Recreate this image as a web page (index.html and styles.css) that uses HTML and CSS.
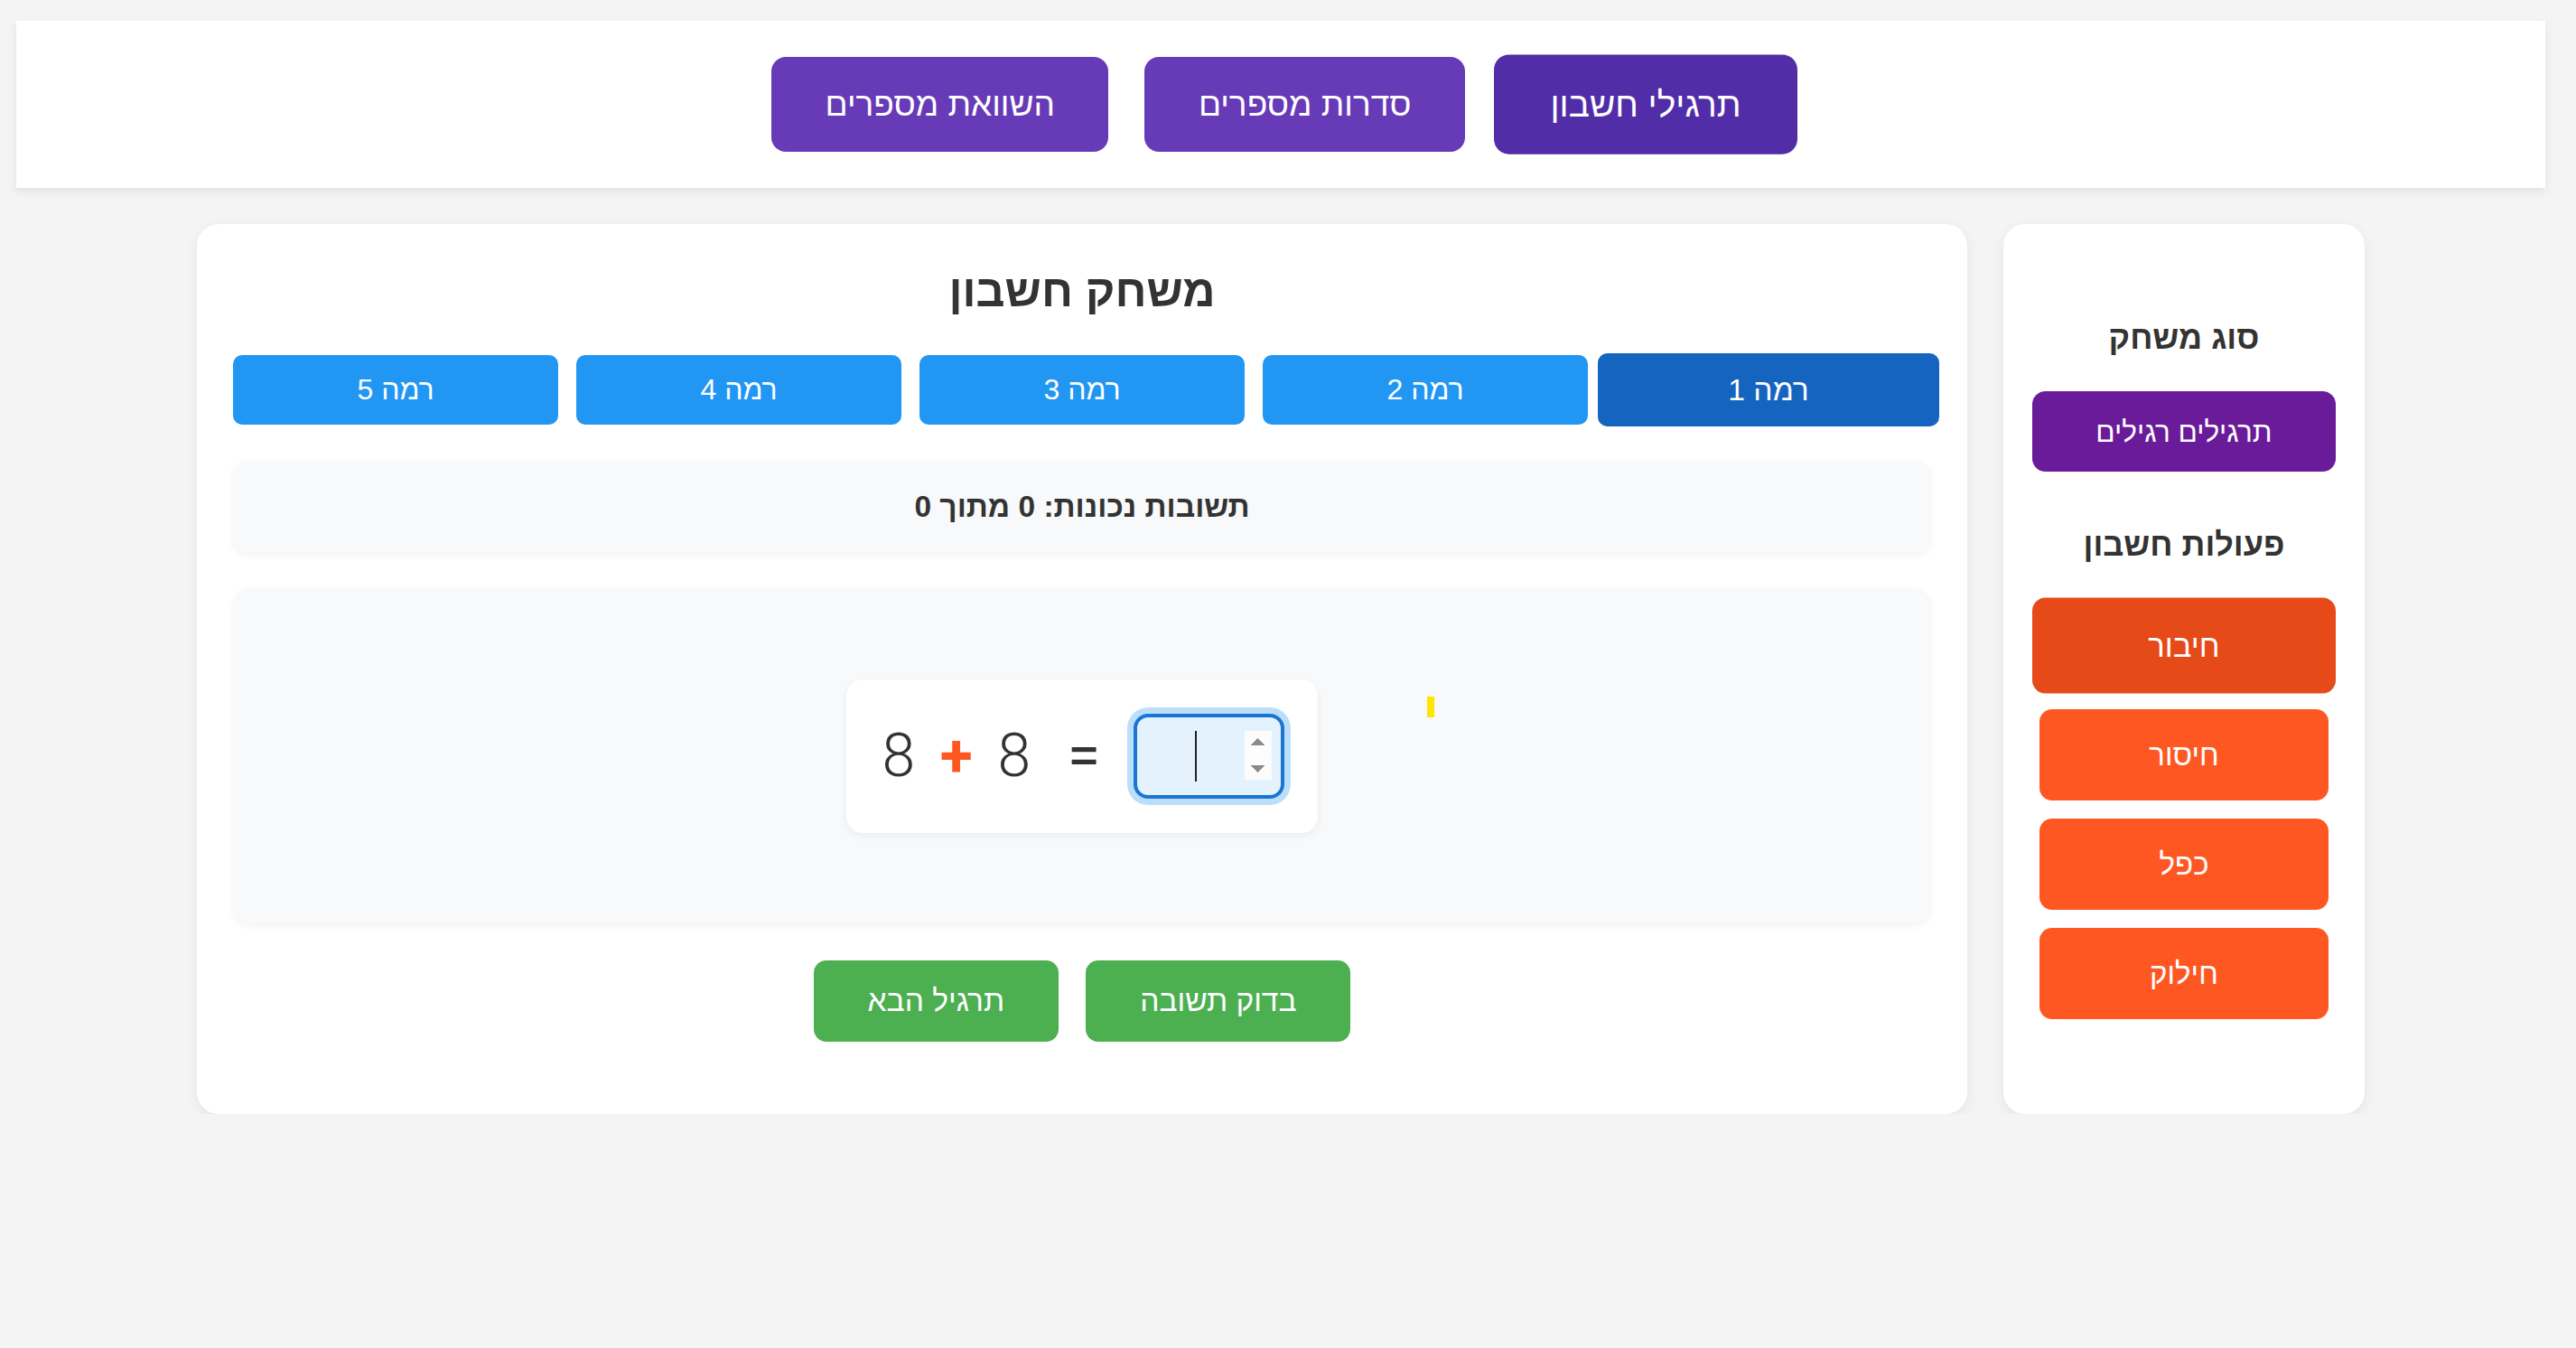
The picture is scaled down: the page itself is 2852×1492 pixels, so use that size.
FILE: index.html
```html
<!DOCTYPE html>
<html lang="he" dir="rtl">
<head>
<meta charset="utf-8">
<title>משחק חשבון</title>
<link rel="stylesheet" href="styles.css">
</head>
<body>
<div class="page">
  <header class="topbar">
    <nav class="tabs">
      <button class="tab active">תרגילי חשבון</button>
      <button class="tab">סדרות מספרים</button>
      <button class="tab">השוואת מספרים</button>
    </nav>
  </header>

  <div class="layout">
    <aside class="sidebar">
      <section class="side-section">
        <h3 class="side-title">סוג משחק</h3>
        <button class="mode active">תרגילים רגילים</button>
      </section>
      <section class="side-section ops-section">
        <h3 class="side-title">פעולות חשבון</h3>
        <div class="ops">
          <button class="op-btn active">חיבור</button>
          <button class="op-btn">חיסור</button>
          <button class="op-btn">כפל</button>
          <button class="op-btn">חילוק</button>
        </div>
      </section>
    </aside>

    <main class="game-card">
      <h1 class="title">משחק חשבון</h1>
      <div class="levels">
        <button class="level active">רמה 1</button>
        <button class="level">רמה 2</button>
        <button class="level">רמה 3</button>
        <button class="level">רמה 4</button>
        <button class="level">רמה 5</button>
      </div>
      <div class="score">תשובות נכונות: 0 מתוך 0</div>
      <div class="game-area">
        <div class="equation">
          <span class="tok num">8</span>
          <span class="tok op">+</span>
          <span class="tok num">8</span>
          <span class="tok eq">=</span>
          <span class="answer-wrap">
            <input class="answer" type="number" autofocus>
            <span class="caret"></span>
          </span>
        </div>
        <span class="spark"></span>
      </div>
      <div class="actions">
        <button class="action">בדוק תשובה</button>
        <button class="action">תרגיל הבא</button>
      </div>
    </main>
  </div>
</div>
</body>
</html>
```

FILE: styles.css
```css
* { box-sizing: border-box; }
html, body { margin: 0; }
body {
  background: #f4f4f4;
  font-family: "Liberation Sans", Arial, sans-serif;
  color: #333;
}
button { font-family: "Liberation Sans", Arial, sans-serif; cursor: pointer; }

.page { width: 2800px; margin: 0 34px 0 18px; padding-top: 23px; }

.topbar {
  background: #fff;
  padding: 40px 0;
  box-shadow: 0 4px 10px rgba(0,0,0,0.08);
}
.tabs { display: flex; justify-content: center; gap: 40px; }
.tab {
  height: 105px;
  padding: 0 59.5px;
  border: 0;
  border-radius: 16px;
  background: #673ab7;
  color: #fff;
  font-size: 37px;
}
.tab.active { background: #512da8; transform: scale(1.05); }

.layout {
  width: 2400px;
  margin: 40px auto 0;
  display: flex;
  gap: 40px;
  align-items: stretch;
}

.sidebar {
  width: 400px;
  flex: none;
  background: #fff;
  border-radius: 24px;
  padding: 40px;
  box-shadow: 0 4px 14px rgba(0,0,0,0.07);
  display: flex;
  flex-direction: column;
  justify-content: center;
}
.side-section { display: flex; flex-direction: column; }
.ops-section { margin-top: 62px; }
.side-title {
  margin: 0 0 41px;
  font-size: 36px;
  line-height: 41px;
  font-weight: bold;
  text-align: center;
  color: #333;
}
.mode {
  height: 85px;
  border: 0;
  border-radius: 14px;
  background: #6a1b9a;
  color: #fff;
  font-size: 30px;
  transform: scale(1.05);
}
.ops { display: flex; flex-direction: column; gap: 20px; }
.op-btn {
  height: 101px;
  border: 0;
  border-radius: 14px;
  background: #ff5722;
  color: #fff;
  font-size: 33px;
}
.op-btn.active { background: #e64a19; transform: scale(1.05); }

.game-card {
  flex: 1;
  background: #fff;
  border-radius: 24px;
  padding: 40px;
  box-shadow: 0 4px 14px rgba(0,0,0,0.07);
}
.title {
  margin: 0 0 38px;
  font-size: 50px;
  line-height: 68px;
  font-weight: bold;
  text-align: center;
  color: #333;
}
.levels { display: flex; gap: 20px; margin-top: -1px; }
.level {
  flex: 1;
  height: 77px;
  border: 0;
  border-radius: 10px;
  background: #2196f3;
  color: #fff;
  font-size: 32px;
}
.level.active { background: #1565c0; transform: scale(1.05); }

.score {
  margin-top: 40px;
  height: 102px;
  display: flex;
  align-items: center;
  justify-content: center;
  background: #f8f9fa;
  border-radius: 16px;
  box-shadow: 0 3px 8px rgba(0,0,0,0.05);
  font-size: 33.5px;
  font-weight: bold;
  color: #333;
}

.game-area {
  position: relative;
  margin-top: 39px;
  height: 371px;
  display: flex;
  align-items: center;
  justify-content: center;
  background: #f8f9fa;
  border-radius: 20px;
  box-shadow: 0 3px 8px rgba(0,0,0,0.05);
}
.equation {
  direction: ltr;
  display: flex;
  align-items: center;
  background: #fff;
  border-radius: 18px;
  padding: 38px 37px 38px 37.5px;
  box-shadow: 0 3px 10px rgba(0,0,0,0.06);
  font-family: Roboto, sans-serif;
  font-weight: 300;
  font-size: 66px;
  color: #333;
}
.tok {
  width: 40px;
  display: inline-flex;
  justify-content: center;
  line-height: 1;
}
.op { margin: 0 24px; color: #ff5722; font-weight: bold; }
.eq { margin: 0 35px 0 37px; font-weight: 400; }

.answer-wrap { position: relative; display: flex; }
.answer {
  zoom: 2;
  width: 83.5px;
  height: 47px;
  padding: 7.5px 5px;
  border: 2px solid #1976d2;
  border-radius: 8px;
  background: #e3f2fd;
  box-shadow: 0 0 0 3.5px #bbdefb;
  font-family: "Liberation Sans", Arial, sans-serif;
  font-size: 24px;
  text-align: center;
  color: #333;
  caret-color: transparent;
  outline: none;
}
.caret {
  position: absolute;
  left: 68px;
  top: 19px;
  width: 2px;
  height: 56px;
  background: #222;
}
.spark {
  position: absolute;
  left: 1322px;
  top: 120px;
  width: 8px;
  height: 23px;
  background: #ffe600;
}

.actions {
  margin: 41px 0 40px;
  display: flex;
  justify-content: center;
  gap: 30px;
}
.action {
  height: 90px;
  padding: 0 60px;
  border: 0;
  border-radius: 14px;
  background: #4caf50;
  color: #fff;
  font-size: 33.5px;
}
```
